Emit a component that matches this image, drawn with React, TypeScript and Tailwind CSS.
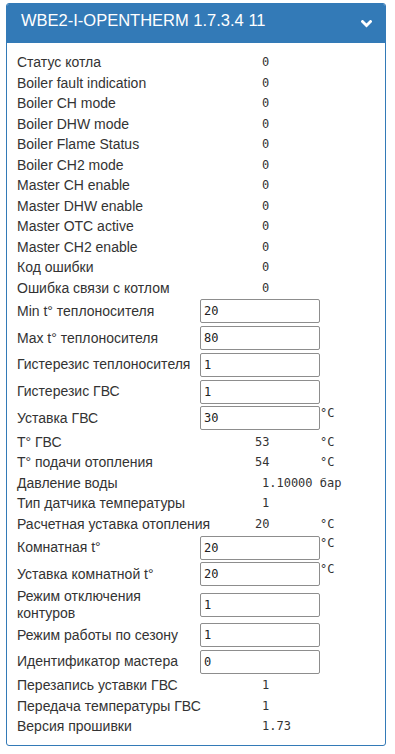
import { useState } from 'react'

// Панель состояния котла WBE2-I-OPENTHERM: заголовок + список параметров.
// Строки бывают двух видов: только чтение (значение моноширинным) и поле ввода.

type Row =
  | { kind: 'text'; label: string; value: string; unit?: string }
  | { kind: 'input'; label: string; value: string; unit?: string; tall?: boolean }

const ROWS: Row[] = [
  { kind: 'text', label: 'Статус котла', value: '0' },
  { kind: 'text', label: 'Boiler fault indication', value: '0' },
  { kind: 'text', label: 'Boiler CH mode', value: '0' },
  { kind: 'text', label: 'Boiler DHW mode', value: '0' },
  { kind: 'text', label: 'Boiler Flame Status', value: '0' },
  { kind: 'text', label: 'Boiler CH2 mode', value: '0' },
  { kind: 'text', label: 'Master CH enable', value: '0' },
  { kind: 'text', label: 'Master DHW enable', value: '0' },
  { kind: 'text', label: 'Master OTC active', value: '0' },
  { kind: 'text', label: 'Master CH2 enable', value: '0' },
  { kind: 'text', label: 'Код ошибки', value: '0' },
  { kind: 'text', label: 'Ошибка связи с котлом', value: '0' },
  { kind: 'input', label: 'Min t° теплоносителя', value: '20' },
  { kind: 'input', label: 'Max t° теплоносителя', value: '80' },
  { kind: 'input', label: 'Гистерезис теплоносителя', value: '1' },
  { kind: 'input', label: 'Гистерезис ГВС', value: '1' },
  { kind: 'input', label: 'Уставка ГВС', value: '30', unit: '°C' },
  { kind: 'text', label: 'T° ГВС', value: '53', unit: '°C' },
  { kind: 'text', label: 'T° подачи отопления', value: '54', unit: '°C' },
  { kind: 'text', label: 'Давление воды', value: '1.10000 бар' },
  { kind: 'text', label: 'Тип датчика температуры', value: '1' },
  { kind: 'text', label: 'Расчетная уставка отопления', value: '20', unit: '°C' },
  { kind: 'input', label: 'Комнатная t°', value: '20', unit: '°C' },
  { kind: 'input', label: 'Уставка комнатной t°', value: '20', unit: '°C' },
  { kind: 'input', label: 'Режим отключения контуров', value: '1', tall: true },
  { kind: 'input', label: 'Режим работы по сезону', value: '1' },
  { kind: 'input', label: 'Идентификатор мастера', value: '0' },
  { kind: 'text', label: 'Перезапись уставки ГВС', value: '1' },
  { kind: 'text', label: 'Передача температуры ГВС', value: '1' },
  { kind: 'text', label: 'Версия прошивки', value: '1.73' },
]

const MONO = "font-['DejaVu_Sans_Mono','Liberation_Mono',monospace] text-[12px]"

function TextRow({ row }: { row: Extract<Row, { kind: 'text' }> }) {
  return (
    <div className="flex h-[20.5px] items-center leading-[20.5px] whitespace-nowrap">
      <span className={row.unit ? 'w-[238px] shrink-0' : 'w-[245px] shrink-0'}>{row.label}</span>
      <span className={`${MONO} ${row.unit ? 'w-[65px] shrink-0' : ''}`}>{row.value}</span>
      {row.unit && <span className={MONO}>{row.unit}</span>}
    </div>
  )
}

function InputRow({ row }: { row: Extract<Row, { kind: 'input' }> }) {
  const [value, setValue] = useState(row.value)
  return (
    <div className={`flex items-center ${row.tall ? 'h-[34px]' : 'h-[26.75px]'}`}>
      <label className="w-[183px] shrink-0 leading-[17px]">
        {row.tall ? (
          <>
            Режим отключения
            <br />
            контуров
          </>
        ) : (
          row.label
        )}
      </label>
      <div className="flex items-start">
        <input
          type="text"
          value={value}
          onChange={(e) => setValue(e.target.value)}
          className={`${MONO} h-[24px] w-[120px] rounded-[2px] border border-[#8d8d8d] bg-white px-[3px] text-[#222] outline-none`}
        />
        {row.unit && <span className={`${MONO} leading-[14px]`}>{row.unit}</span>}
      </div>
    </div>
  )
}

export default function App() {
  return (
    <div className="min-h-screen bg-white pt-[3px] pl-[6px] font-['Liberation_Sans',Arial,sans-serif] text-[14px] text-[#333]">
      <section className="w-[380px] overflow-hidden rounded-[3px] border border-[#337ab7]">
        {/* Заголовок панели */}
        <header className="flex h-[39px] items-start justify-between bg-[#337ab7] pt-[7px] pr-[13px] pl-[14px] text-white">
          <h3 className="text-[16.5px] leading-[18px]">WBE2-I-OPENTHERM 1.7.3.4 11</h3>
          <svg width="11" height="8" viewBox="0 0 11 8" className="mt-[9px]" aria-hidden="true">
            <polyline
              points="1.5,1.5 5.5,5.5 9.5,1.5"
              fill="none"
              stroke="white"
              strokeWidth="2.8"
              strokeLinecap="square"
            />
          </svg>
        </header>

        {/* Параметры */}
        <div className="pt-[9px] pb-[8px] pl-[10px]">
          {ROWS.map((row) =>
            row.kind === 'text' ? (
              <TextRow key={row.label} row={row} />
            ) : (
              <InputRow key={row.label} row={row} />
            ),
          )}
        </div>
      </section>
    </div>
  )
}
